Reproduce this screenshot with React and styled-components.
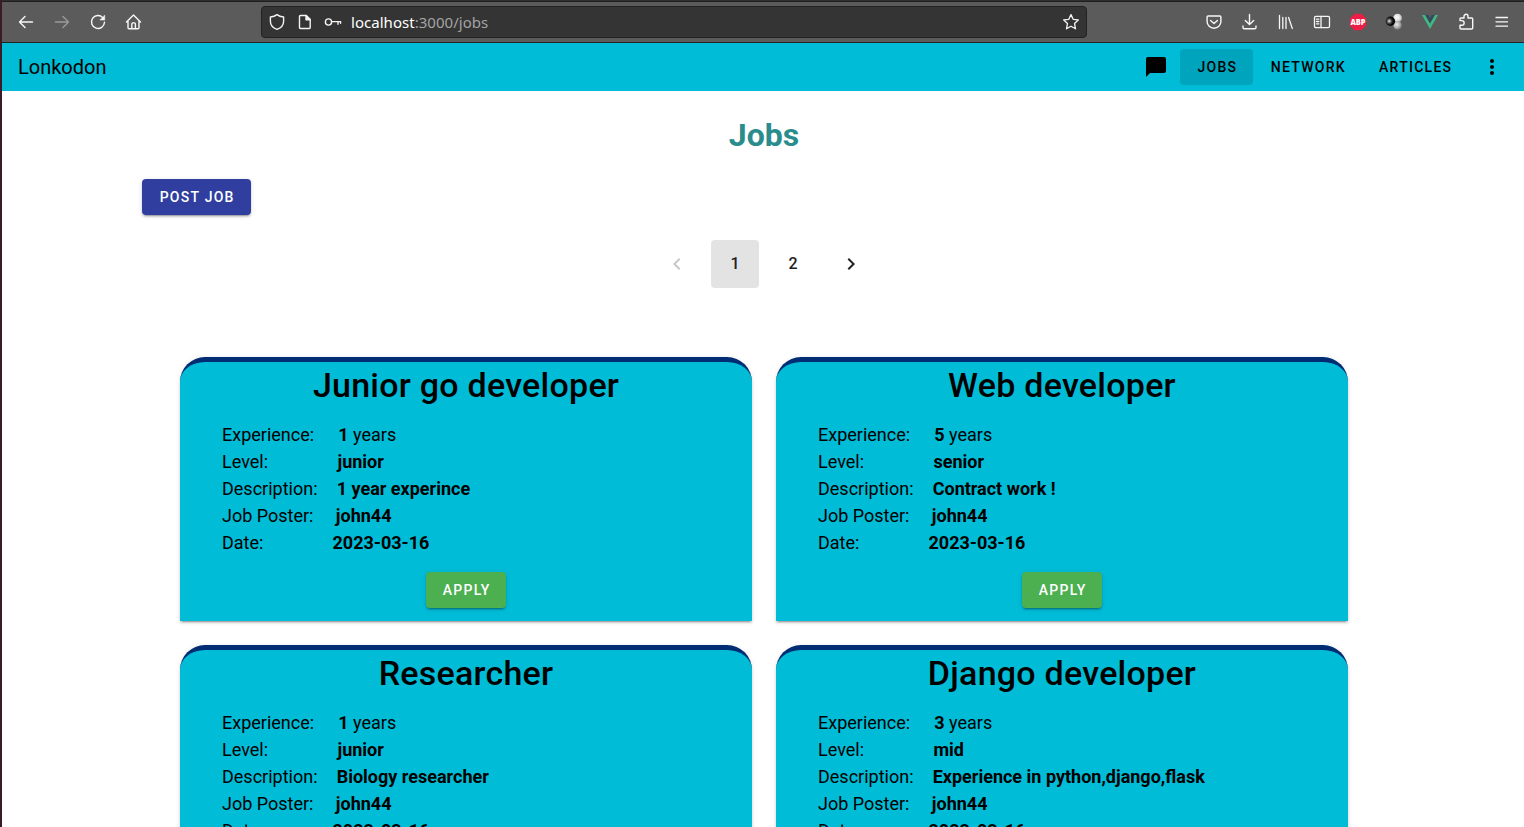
import React from "react";
import styled, { createGlobalStyle } from "styled-components";

const GlobalStyle = createGlobalStyle`
  * { box-sizing: border-box; }
  html, body { margin: 0; height: 100%; overflow: hidden; background: #fff; }
  body { font-family: Roboto, "Liberation Sans", sans-serif; color: #000; }
  button { font-family: inherit; border: 0; margin: 0; }
`;

const Window = styled.div`
  height: 827px;
  overflow: hidden;
  border-left: 2px solid #3d1a2a;
  background: #fff;
`;

const TabStrip = styled.div`
  height: 2px;
  background: #2f2f2f;
  border-bottom: 1px solid #1e1e1e;
`;

const BrowserBar = styled.div`
  height: 41px;
  display: flex;
  align-items: center;
  justify-content: space-between;
  padding: 0 4px 0 6px;
  background: #5b5b5b;
  border-bottom: 1px solid #232323;
`;

const ToolGroup = styled.div`
  display: flex;
`;

const ToolButton = styled.button`
  width: 36px;
  height: 36px;
  padding: 0;
  display: grid;
  place-items: center;
  background: none;
  color: #f7f7f7;
  opacity: ${(p) => (p.$dim ? 0.4 : 1)};
`;

const AddressBar = styled.div`
  width: 826px;
  height: 32px;
  margin-left: 109px;
  margin-right: auto;
  display: flex;
  align-items: center;
  padding: 0 6px;
  gap: 10px;
  color: #f4f4f4;
  background: #343434;
  border: 1px solid #222;
  border-radius: 4px;
`;

const Address = styled.div`
  flex: 1;
  margin-left: -1px;
  font: 15px/20px "Noto Sans", "Open Sans", sans-serif;
  letter-spacing: 0.03px;
  color: #a3a3a3;
`;

const Host = styled.span`
  color: #fff;
`;

const AppBar = styled.header`
  height: 48px;
  display: flex;
  align-items: center;
  padding: 0 16px;
  background: #00bcd7;
`;

const Brand = styled.div`
  flex: 1;
  font-size: 20px;
  line-height: 24px;
`;

const NavIcon = styled.div`
  width: 24px;
  height: 24px;
  margin-left: ${(p) => p.$before || 0}px;
  margin-right: ${(p) => p.$after || 0}px;
`;

const Button = styled.button`
  width: ${(p) => p.$width}px;
  height: 36px;
  padding: 0 0 0 1.4px;
  border-radius: 4px;
  font-size: 14px;
  font-weight: 500;
  line-height: 36px;
  letter-spacing: 1.25px;
  text-transform: uppercase;
  white-space: nowrap;
`;

const NavButton = styled(Button)`
  color: #000;
  background: ${(p) => (p.$active ? "#00a5bd" : "transparent")};
`;

const RaisedButton = styled(Button)`
  color: #fff;
  background: ${(p) => p.$color};
  box-shadow: 0 3px 1px -2px rgba(0, 0, 0, 0.2), 0 2px 2px 0 rgba(0, 0, 0, 0.14),
    0 1px 5px 0 rgba(0, 0, 0, 0.12);
`;

const Page = styled.div`
  display: flow-root;
  padding-left: 2px;
`;

const PageTitle = styled.h1`
  margin: 25px 0 25px;
  font-size: 32px;
  font-weight: 700;
  line-height: 38px;
  text-align: center;
  color: #2a8c8c;
`;

const Actions = styled.div`
  padding-left: 138px;
`;

const Pagination = styled.nav`
  margin-top: 25px;
  display: flex;
  justify-content: center;
  gap: 10px;
`;

const PageButton = styled.button`
  width: 48px;
  height: 48px;
  padding: 0 0 ${(p) => (p.$icon ? 0 : 1)}px;
  display: grid;
  place-items: center;
  border-radius: 4px;
  font-size: 16px;
  font-weight: 500;
  line-height: 19px;
  color: ${(p) => (p.$disabled ? "#c7c7c7" : "#212121")};
  background: ${(p) => (p.$active ? "#e3e3e3" : "transparent")};
`;

const JobGrid = styled.main`
  margin-top: 69px;
  display: grid;
  grid-template-columns: 572px 572px;
  justify-content: center;
  gap: 24px;
`;

const Card = styled.article`
  height: 264px;
  padding-top: 3px;
  display: flex;
  flex-direction: column;
  align-items: center;
  background: #00bcd7;
  border-top: 5px solid #002c73;
  border-radius: 25px 25px 0 0;
  box-shadow: 0 3px 1px -2px rgba(0, 0, 0, 0.2), 0 2px 2px 0 rgba(0, 0, 0, 0.14),
    0 1px 5px 0 rgba(0, 0, 0, 0.12);
`;

const CardTitle = styled.h2`
  margin: 0 0 16px;
  font-size: 34px;
  font-weight: 500;
  line-height: 40px;
  letter-spacing: 0.25px;
`;

const Details = styled.div`
  align-self: stretch;
  padding-left: 42px;
  margin-bottom: 16px;
`;

const Detail = styled.div`
  display: flex;
  font-size: 18px;
  line-height: 27px;
  white-space: pre;
`;

const Label = styled.span`
  width: ${(p) => p.$width}px;
`;

const Value = styled.span`
  font-weight: 700;
`;

const Svg = ({ s = 18, sw = 1.2, children }) => (
  <svg width={s} height={s} viewBox="0 0 18 18" fill="none" stroke="currentColor" strokeWidth={sw} strokeLinecap="round" strokeLinejoin="round">
    {children}
  </svg>
);

const BackIcon = () => <Svg sw={1.4}><path d="M15.500 9H2.500M8 3.500 2.500 9 8 14.500" /></Svg>;
const ForwardIcon = () => <Svg sw={1.4}><path d="M2.500 9h13M10 3.500 15.500 9 10 14.500" /></Svg>;
const ReloadIcon = () => (
  <Svg sw={1.4}>
    <path d="M13.800 4.600A6.500 6.500 0 1 0 15.500 9.300" />
    <path d="M15.700 2.500V7h-4.500z" fill="currentColor" strokeWidth="0.600" />
  </Svg>
);
const HomeIcon = () => (
  <Svg sw={1.4}>
    <path d="M1.500 8.900 8.500 2l7 6.900M3 8v6.800q0 1 1 1h9q1 0 1-1V8" />
    <path d="M6.800 15.500v-4.600q0-1 1-1h1.600q1 0 1 1v4.600" />
  </Svg>
);
const ShieldIcon = () => <Svg sw={1.4}><path d="M9 1.600c2 1.500 4.200 2.100 6.600 2.400v4.200c0 4-2.600 6.700-6.600 8.200-4-1.500-6.600-4.200-6.600-8.200V4C4.800 3.700 7 3.100 9 1.600z" /></Svg>;
const DocumentIcon = () => (
  <Svg sw={1.4}>
    <path d="M4.500 2.500h5.700l4 4V14.500q0 1-1 1H4.500q-1 0-1-1v-11q0-1 1-1z" />
    <path d="M10 2.500v4.300h4.300z" fill="currentColor" />
  </Svg>
);
const KeyIcon = () => (
  <Svg sw={1.4}>
    <circle cx="4.500" cy="9" r="3.100" />
    <path d="M7.600 8.600h9M14 8.600v2.600M16.600 8.600v1.600" />
  </Svg>
);
const StarIcon = () => <Svg sw={1.3}><path d="m9 1.600 2.200 4.700 5.100.6-3.800 3.500 1 5.400L9 13.200l-4.500 2.600 1-5.400-3.800-3.500 5.100-.6z" /></Svg>;
const PocketIcon = () => (
  <Svg sw={1.4}>
    <path d="M3.200 3h11.600q1.100 0 1.100 1.100V8.500a6.900 6.700 0 0 1-13.800 0V4.100Q2.100 3 3.200 3z" />
    <path d="M5.600 7.400 9 10.500l3.400-3.100" />
  </Svg>
);
const DownloadIcon = () => <Svg sw={1.4}><path d="M8.500 1.500v10M4.300 7.500 8.500 11.600l4.200-4.100M2 13v1.500q0 1.300 1.300 1.300h10.400q1.300 0 1.300-1.300V13" /></Svg>;
const LibraryIcon = () => <Svg sw={1.3}><path d="M2.500 2.500v13M5.800 4.500v11M9 4.500v11M11.600 4.500l3.700 11" /></Svg>;
const SidebarIcon = () => (
  <Svg sw={1.3}>
    <rect x="1.500" y="3.400" width="15" height="11.200" rx="1.300" />
    <path d="M8 3.400v11.200M3.600 6.200h2.200M3.600 8.500h2.200M3.600 10.800h2.200" />
  </Svg>
);
const AdblockIcon = () => (
  <svg width="18" height="18" viewBox="0 0 18 18">
    <path d="M5.600 .8h6.800L17.200 5.600v6.800L12.400 17.200H5.600L.8 12.400V5.600z" fill="#ed1e45" />
    <text x="9" y="12" textAnchor="middle" fill="#fff" fontFamily="Open Sans, sans-serif" fontSize="8.400" fontWeight="800" textLength="15" lengthAdjust="spacingAndGlyphs">ABP</text>
  </svg>
);
const SpheresIcon = () => (
  <svg width="18" height="18" viewBox="0 0 18 18">
    <defs>
      <radialGradient id="dark" cx="38%" cy="48%" r="62%">
        <stop offset="0" stopColor="#f2f2f2" />
        <stop offset=".35" stopColor="#555" />
        <stop offset=".7" stopColor="#050505" />
      </radialGradient>
      <radialGradient id="light" cx="42%" cy="40%" r="65%">
        <stop offset="0" stopColor="#fff" />
        <stop offset=".6" stopColor="#dcdcdc" />
        <stop offset="1" stopColor="#8a8a8a" />
      </radialGradient>
      <radialGradient id="grey" cx="40%" cy="40%" r="65%">
        <stop offset="0" stopColor="#ececec" />
        <stop offset=".6" stopColor="#aaa" />
        <stop offset="1" stopColor="#666" />
      </radialGradient>
    </defs>
    <circle cx="12.600" cy="5.200" r="4.400" fill="url(#light)" />
    <circle cx="12.600" cy="12.400" r="4.300" fill="url(#grey)" />
    <circle cx="5.400" cy="8.300" r="4.700" fill="url(#dark)" />
  </svg>
);
const VueIcon = () => (
  <svg width="18" height="18" viewBox="0 0 18 18">
    <path d="M1 2h3.200L9 10.200 13.800 2H17L9 16z" fill="#41b883" />
    <path d="M4.200 2h3L9 5.200 10.800 2h3L9 10.200z" fill="#34495e" />
  </svg>
);
const PuzzleIcon = () => <Svg sw={1.4}><path d="M3 7.600V6q0-1 1-1h3V3.300a2 2 0 0 1 4 0V5h3.700q1 0 1 1v9q0 1-1 1H4q-1 0-1-1v-2.700h1.800a2 2 0 0 0 0-4.700z" /></Svg>;
const MenuIcon = () => <Svg sw={1.3}><path d="M3 4.500h11.500M3 8.800h11.500M3 13.200h11.500" /></Svg>;

const GlyphIcon = ({ d, size = 24 }) => (
  <svg width={size} height={size} viewBox="0 0 24 24" fill="currentColor" display="block">
    <path d={d} />
  </svg>
);
const CHAT = "M20 2H4a2 2 0 0 0-2 2v18l4-4h14a2 2 0 0 0 2-2V4a2 2 0 0 0-2-2z";
const DOTS = "M12 16a2 2 0 1 1 0 4 2 2 0 0 1 0-4m0-6a2 2 0 1 1 0 4 2 2 0 0 1 0-4m0-6a2 2 0 1 1 0 4 2 2 0 0 1 0-4z";
const CHEVRON_LEFT = "M15.410 16.580 10.830 12l4.580-4.590L14 6l-6 6 6 6z";
const CHEVRON_RIGHT = "M8.590 16.580 13.170 12 8.590 7.410 10 6l6 6-6 6z";

const extensions = [PocketIcon, DownloadIcon, LibraryIcon, SidebarIcon, AdblockIcon, SpheresIcon, VueIcon, PuzzleIcon, MenuIcon];

const jobs = [
  { title: "Junior go developer", years: 1, level: "junior", description: "1 year experince", poster: "john44", date: "2023-03-16" },
  { title: "Web developer", years: 5, level: "senior", description: "Contract work !", poster: "john44", date: "2023-03-16" },
  { title: "Researcher", years: 1, level: "junior", description: "Biology researcher", poster: "john44", date: "2023-03-16" },
  { title: "Django developer", years: 3, level: "mid", description: "Experience in python,django,flask", poster: "john44", date: "2023-03-16" },
];

const JobCard = ({ job }) => (
  <Card>
    <CardTitle>{job.title}</CardTitle>
    <Details>
      <Detail><Label $width={116.3}>Experience:</Label><Value>{job.years}</Value> years</Detail>
      <Detail><Label $width={115.5}>Level:</Label><Value>{job.level}</Value></Detail>
      <Detail><Label $width={114.7}>Description:</Label><Value>{job.description}</Value></Detail>
      <Detail><Label $width={113.8}>Job Poster:</Label><Value>{job.poster}</Value></Detail>
      <Detail><Label $width={110.5}>Date:</Label><Value>{job.date}</Value></Detail>
    </Details>
    <RaisedButton $width={80} $color="#4caf50">Apply</RaisedButton>
  </Card>
);

export default function App() {
  return (
    <Window>
      <GlobalStyle />
      <TabStrip />
      <BrowserBar>
        <ToolGroup>
          <ToolButton><BackIcon /></ToolButton>
          <ToolButton $dim><ForwardIcon /></ToolButton>
          <ToolButton><ReloadIcon /></ToolButton>
          <ToolButton><HomeIcon /></ToolButton>
        </ToolGroup>
        <AddressBar>
          <ShieldIcon />
          <DocumentIcon />
          <KeyIcon />
          <Address><Host>localhost</Host>:3000/jobs</Address>
          <StarIcon />
        </AddressBar>
        <ToolGroup>
          {extensions.map((Icon, i) => (
            <ToolButton key={i}><Icon /></ToolButton>
          ))}
        </ToolGroup>
      </BrowserBar>
      <AppBar>
        <Brand>Lonkodon</Brand>
        <NavIcon $after={11.7}><GlyphIcon d={CHAT} /></NavIcon>
        <NavButton $width={73.3} $active>Jobs</NavButton>
        <NavButton $width={108.7}>Network</NavButton>
        <NavButton $width={106}>Articles</NavButton>
        <NavIcon $before={12} $after={4}><GlyphIcon d={DOTS} /></NavIcon>
      </AppBar>
      <Page>
        <PageTitle>Jobs</PageTitle>
        <Actions>
          <RaisedButton $width={109} $color="#303f9f">Post job</RaisedButton>
        </Actions>
        <Pagination>
          <PageButton $icon $disabled><GlyphIcon d={CHEVRON_LEFT} /></PageButton>
          <PageButton $active>1</PageButton>
          <PageButton>2</PageButton>
          <PageButton $icon><GlyphIcon d={CHEVRON_RIGHT} /></PageButton>
        </Pagination>
        <JobGrid>
          {jobs.map((job) => (
            <JobCard key={job.title} job={job} />
          ))}
        </JobGrid>
      </Page>
    </Window>
  );
}
